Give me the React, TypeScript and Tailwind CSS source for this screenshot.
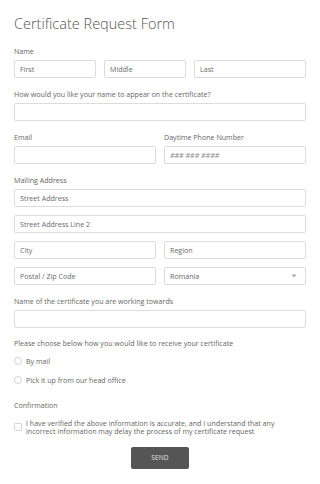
import type { ReactNode } from "react";

/** Certificate request form — a single column of labelled fields, compact for a narrow frame. */

const inputCls =
  "block h-[18px] w-full rounded-[2px] border border-[#dcdcdc] bg-white px-[5px] text-[7.1px] text-[#666] outline-none placeholder:text-[#6a6a6a]";

function Label({ children }: { children: ReactNode }) {
  return <div className="mb-[4px] h-[10px] text-[7.1px] leading-[10px] text-[#666]">{children}</div>;
}

function Radio({ label }: { label: string }) {
  return (
    <label className="flex h-[10px] items-center gap-[4px] text-[7.1px] leading-[10px] text-[#666]">
      <span className="block h-[8px] w-[8px] rounded-full border border-[#d4d4d4] bg-white" />
      {label}
    </label>
  );
}

export default function App() {
  return (
    <div className="min-h-[484px] w-[320px] bg-white px-[14px] pt-[14px] font-['Open_Sans',sans-serif] text-[#555]">
      <h1 className="mb-[12px] h-[20px] text-[14.5px] leading-[20px] font-light text-[#555]">
        Certificate Request Form
      </h1>

      <Label>Name</Label>
      <div className="grid grid-cols-[82px_82px_1fr] gap-[8px]">
        <input className={inputCls} placeholder="First" />
        <input className={inputCls} placeholder="Middle" />
        <input className={inputCls} placeholder="Last" />
      </div>

      <div className="mt-[11px]">
        <Label>How would you like your name to appear on the certificate?</Label>
        <input className={inputCls} />
      </div>

      <div className="mt-[11px] grid grid-cols-2 gap-[8px]">
        <div>
          <Label>Email</Label>
          <input className={inputCls} />
        </div>
        <div>
          <Label>Daytime Phone Number</Label>
          <input className={`${inputCls} placeholder:italic placeholder:text-[#888]`} placeholder="### ### ####" />
        </div>
      </div>

      <div className="mt-[11px]">
        <Label>Mailing Address</Label>
        <div className="flex flex-col gap-[8px]">
          <input className={inputCls} placeholder="Street Address" />
          <input className={inputCls} placeholder="Street Address Line 2" />
          <div className="grid grid-cols-2 gap-[8px]">
            <input className={inputCls} placeholder="City" />
            <input className={inputCls} placeholder="Region" />
          </div>
          <div className="grid grid-cols-2 gap-[8px]">
            <input className={inputCls} placeholder="Postal / Zip Code" />
            <div className="flex h-[18px] items-center justify-between rounded-[2px] border border-[#dcdcdc] bg-white px-[5px] text-[7.1px] text-[#666]">
              <span>Romania</span>
              <svg width="6" height="4" viewBox="0 0 6 4" className="mr-[3px]">
                <path d="M0.5 0.5h5L3 3.5z" fill="#aaa" />
              </svg>
            </div>
          </div>
        </div>
      </div>

      <div className="mt-[11px]">
        <Label>Name of the certificate you are working towards</Label>
        <input className={inputCls} />
      </div>

      <div className="mt-[10px] h-[10px] text-[7.1px] leading-[10px] text-[#666]">
        Please choose below how you would like to receive your certificate
      </div>
      <div className="mt-[8px] flex flex-col gap-[8.5px]">
        <Radio label="By mail" />
        <Radio label="Pick it up from our head office" />
      </div>

      <div className="mt-[15px] h-[10px] text-[7.1px] leading-[10px] text-[#666]">Confirmation</div>
      <label className="mt-[9px] flex items-center gap-[4px]">
        <span className="mt-[1px] block h-[8px] w-[8px] shrink-0 rounded-[1px] border border-[#d4d4d4] bg-white" />
        <span className="max-w-[258px] text-[7.1px] leading-[8px] text-[#666]">
          I have verified the above information is accurate, and I understand that any incorrect information
          may delay the process of my certificate request
        </span>
      </label>

      <div className="mt-[12px] flex justify-center">
        <button className="h-[22px] w-[58px] rounded-[2px] bg-[#555] text-[6.5px] tracking-[0.2px] text-[#e5e5e5]">
          SEND
        </button>
      </div>
    </div>
  );
}
